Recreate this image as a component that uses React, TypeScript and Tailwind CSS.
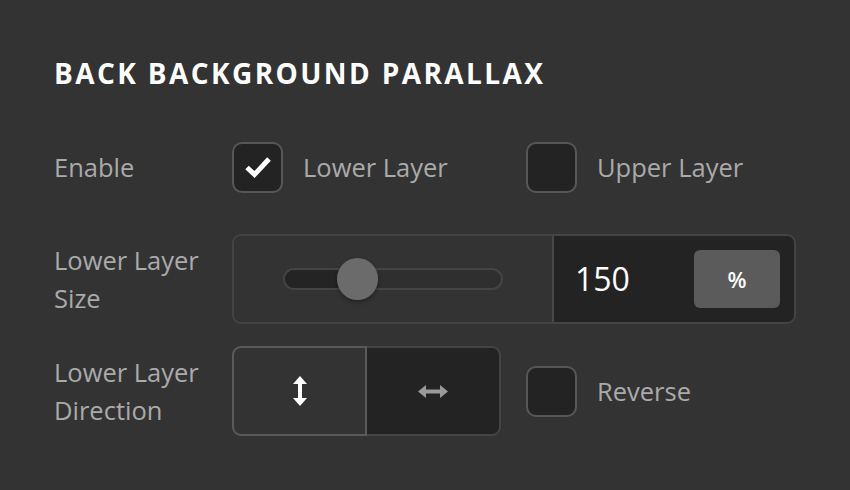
import React, { useState } from 'react'

const font = { fontFamily: '"Open Sans", "Liberation Sans", sans-serif' }

function CheckBox({ checked, onClick }: { checked: boolean; onClick: () => void }) {
  return (
    <button
      onClick={onClick}
      className="flex h-[51px] w-[51px] shrink-0 items-center justify-center rounded-[10px] border-2 border-[#575757] bg-[#232323]"
    >
      {checked && (
        <svg width="30" height="24" viewBox="0 0 30 24">
          <path d="M4 12.5 L11.5 19.5 L26 4" fill="none" stroke="#fff" strokeWidth="5" strokeLinejoin="miter" />
        </svg>
      )}
    </button>
  )
}

export default function App() {
  const [lower, setLower] = useState(true)
  const [upper, setUpper] = useState(false)
  const [reverse, setReverse] = useState(false)
  const [dir, setDir] = useState<'v' | 'h'>('v')

  return (
    <div className="min-h-[490px] w-[850px] bg-[#333333] pl-[54px] pt-[54px]" style={font}>
      <h2 className="text-[28px] font-bold leading-[38px] tracking-[2.4px] text-white">BACK BACKGROUND PARALLAX</h2>

      <div className="mt-[30px] flex h-[90px] items-center">
        <div className="w-[178px] text-[25.5px] text-[#aaaaaa]">Enable</div>
        <div className="flex w-[294px] items-center gap-[20px]">
          <CheckBox checked={lower} onClick={() => setLower(!lower)} />
          <span className="text-[25.5px] text-[#aaaaaa]">Lower Layer</span>
        </div>
        <div className="flex items-center gap-[20px]">
          <CheckBox checked={upper} onClick={() => setUpper(!upper)} />
          <span className="text-[25.5px] text-[#aaaaaa]">Upper Layer</span>
        </div>
      </div>

      <div className="mt-[22px] flex h-[90px] items-center">
        <div className="w-[178px] text-[25.5px] leading-[38px] text-[#aaaaaa]">
          Lower Layer
          <br />
          Size
        </div>
        <div className="flex h-[90px] w-[564px] overflow-hidden rounded-[9px] border-2 border-[#444444]">
          <div className="flex w-[320px] items-center justify-center border-r-2 border-[#484848] bg-[#333333]">
            <div className="relative h-[22px] w-[220px] rounded-full border-2 border-[#444444] bg-[#2f2f2f]">
              <div className="absolute left-0 top-0 h-full w-[74px] rounded-l-full bg-[#242424]" />
              <div className="absolute left-[52px] top-1/2 h-[42px] w-[41px] -translate-y-1/2 rounded-full bg-[#6b6b6b] shadow-[0_2px_4px_rgba(0,0,0,0.35)]" />
            </div>
          </div>
          <div className="flex flex-1 items-center bg-[#232323] pl-[21px] pr-[14px]">
            <span className="flex-1 text-[32px] text-white">150</span>
            <button className="flex h-[58px] w-[86px] items-center justify-center rounded-[6px] bg-[#5b5b5b] text-[22px] font-semibold text-white">
              %
            </button>
          </div>
        </div>
      </div>

      <div className="mt-[22px] flex h-[90px] items-center">
        <div className="w-[178px] text-[25.5px] leading-[38px] text-[#aaaaaa]">
          Lower Layer
          <br />
          Direction
        </div>
        <div className="flex h-[90px] w-[269px]">
          <button
            onClick={() => setDir('v')}
            className="flex w-[135px] items-center justify-center rounded-l-[9px] border-2 border-[#5a5a5a] bg-[#333333]"
          >
            <svg width="14" height="30" viewBox="0 0 14 30">
              <path d="M7 0 L14 8 L9 8 L9 22 L14 22 L7 30 L0 22 L5 22 L5 8 L0 8 Z" fill={dir === 'v' ? '#ffffff' : '#9a9a9a'} />
            </svg>
          </button>
          <button
            onClick={() => setDir('h')}
            className="flex flex-1 items-center justify-center rounded-r-[9px] border-y-2 border-r-2 border-[#444444] bg-[#232323]"
          >
            <svg width="30" height="13" viewBox="0 0 30 13">
              <path d="M0 6.5 L8 0 L8 4.5 L22 4.5 L22 0 L30 6.5 L22 13 L22 8.5 L8 8.5 L8 13 Z" fill={dir === 'h' ? '#ffffff' : '#9a9a9a'} />
            </svg>
          </button>
        </div>
        <div className="ml-[25px] flex items-center gap-[20px]">
          <CheckBox checked={reverse} onClick={() => setReverse(!reverse)} />
          <span className="text-[25.5px] text-[#aaaaaa]">Reverse</span>
        </div>
      </div>
    </div>
  )
}
